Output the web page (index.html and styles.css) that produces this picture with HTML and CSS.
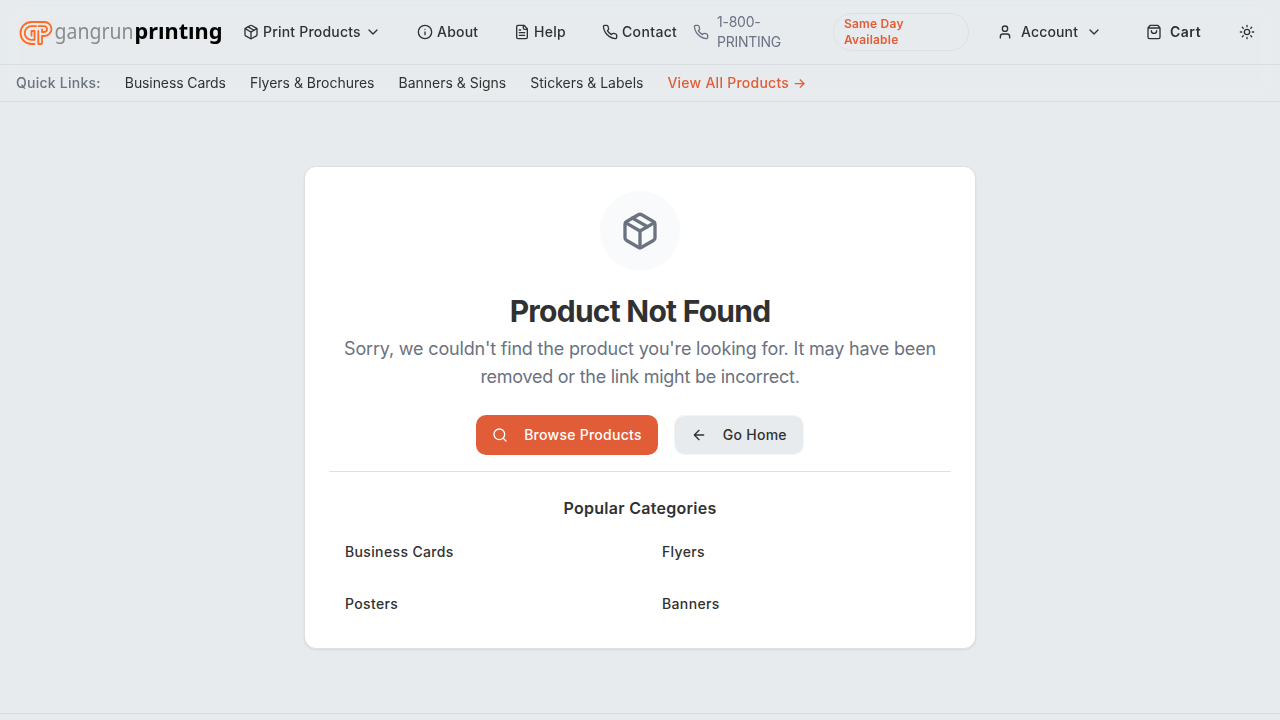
FILE: index.html
```html
<!DOCTYPE html>
<html lang="en">
<head>
<meta charset="utf-8">
<title>Product Not Found</title>
<link rel="stylesheet" href="styles.css">
</head>
<body>
<svg class="defs" width="0" height="0">
  <symbol id="package" viewBox="0 0 24 24"><path d="m7.5 4.27 9 5.15"/><path d="M21 8a2 2 0 0 0-1-1.73l-7-4a2 2 0 0 0-2 0l-7 4A2 2 0 0 0 3 8v8a2 2 0 0 0 1 1.73l7 4a2 2 0 0 0 2 0l7-4A2 2 0 0 0 21 16Z"/><path d="m3.3 7 8.7 5 8.7-5"/><path d="M12 22V12"/></symbol>
  <symbol id="chevron" viewBox="0 0 24 24"><path d="m6 9 6 6 6-6"/></symbol>
  <symbol id="phone" viewBox="0 0 24 24"><path d="M22 16.92v3a2 2 0 0 1-2.18 2 19.79 19.79 0 0 1-8.63-3.07 19.5 19.5 0 0 1-6-6 19.79 19.79 0 0 1-3.07-8.67A2 2 0 0 1 4.11 2h3a2 2 0 0 1 2 1.72 12.84 12.84 0 0 0 .7 2.81 2 2 0 0 1-.45 2.11L8.09 9.91a16 16 0 0 0 6 6l1.27-1.27a2 2 0 0 1 2.11-.45 12.84 12.84 0 0 0 2.81.7A2 2 0 0 1 22 16.92z"/></symbol>
</svg>
<header class="header">
  <div class="topbar">
    <a class="logo"><svg width="216" height="48" viewBox="0 -8 216 48" role="img" aria-label="gangrunprinting">
      <g class="logo-mark">
        <path d="M18.500 28H15.500A11 11 0 0 1 15.500 6H28.500A7 7 0 0 1 28.500 20H26V27.500Q26 28 24.500 28H22.300V15"/>
        <path d="M20 10.200H15.500A6.800 6.800 0 0 0 15.500 23.800H18.500V15H15.500V19.500"/>
        <path d="M22.500 10.200H28.200A2.900 2.900 0 0 1 28.200 16H26V13.500"/>
      </g>
      <text class="logo-thin" x="38.500" y="23.200" textLength="79" lengthAdjust="spacingAndGlyphs">gangrun</text>
      <text class="logo-bold" x="118.500" y="23.200" textLength="88" lengthAdjust="spacingAndGlyphs">prıntıng</text>
    </svg></a>
    <nav class="nav">
      <a class="nav-item products"><svg class="icon"><use href="#package"/></svg><span>Print Products</span><svg class="icon chev"><use href="#chevron"/></svg></a>
      <a class="nav-item about"><svg class="icon" viewBox="0 0 24 24"><circle cx="12" cy="12" r="10"/><path d="M12 16v-4M12 8h.01"/></svg><span>About</span></a>
      <a class="nav-item help"><svg class="icon" viewBox="0 0 24 24"><path d="M15 2H6a2 2 0 0 0-2 2v16a2 2 0 0 0 2 2h12a2 2 0 0 0 2-2V7Z"/><path d="M14 2v4a2 2 0 0 0 2 2h4M10 9H8M16 13H8M16 17H8"/></svg><span>Help</span></a>
      <a class="nav-item contact"><svg class="icon"><use href="#phone"/></svg><span>Contact</span></a>
    </nav>
    <a class="tel"><svg class="icon"><use href="#phone"/></svg><span>1-800-<br>PRINTING</span></a>
    <span class="badge">Same Day<br>Available</span>
    <a class="nav-item account"><svg class="icon" viewBox="0 0 24 24"><path d="M19 21v-2a4 4 0 0 0-4-4H9a4 4 0 0 0-4 4v2"/><circle cx="12" cy="7" r="4"/></svg><span>Account</span><svg class="icon"><use href="#chevron"/></svg></a>
    <a class="nav-item cart"><svg class="icon" viewBox="0 0 24 24"><path d="M6 2 3 6v14a2 2 0 0 0 2 2h14a2 2 0 0 0 2-2V6l-3-4ZM3 6h18M16 10a4 4 0 0 1-8 0"/></svg><span>Cart</span></a>
    <a class="theme"><svg class="icon" viewBox="0 0 24 24"><circle cx="12" cy="12" r="4"/><path d="M12 2v2M12 20v2m-7.070-17.070 1.410 1.410m11.320 11.320 1.410 1.410M2 12h2M20 12h2M6.340 17.660l-1.410 1.410M19.070 4.930l-1.410 1.410"/></svg></a>
  </div>
  <div class="quick">
    <span class="quick-label">Quick Links:</span>
    <a class="tight">Business Cards</a><a>Flyers &amp; Brochures</a><a>Banners &amp; Signs</a><a>Stickers &amp; Labels</a>
    <a class="view-all">View All Products →</a>
  </div>
</header>
<main class="main">
  <section class="card">
    <div class="circle"><svg class="icon-large"><use href="#package"/></svg></div>
    <h1 class="title">Product Not Found</h1>
    <p class="message">Sorry, we couldn't find the product you're looking for. It may have been <span class="message-end">removed or the link might be incorrect.</span></p>
    <div class="actions">
      <a class="btn primary"><svg class="icon" viewBox="0 0 24 24"><circle cx="11" cy="11" r="8"/><path d="m21 21-4.300-4.300"/></svg><span>Browse Products</span></a>
      <a class="btn secondary"><svg class="icon" viewBox="0 0 24 24"><path d="m12 19-7-7 7-7M19 12H5"/></svg><span>Go Home</span></a>
    </div>
    <div class="popular">
      <h2 class="subtitle">Popular Categories</h2>
      <div class="categories"><a>Business Cards</a><a>Flyers</a><a>Posters</a><a>Banners</a></div>
    </div>
  </section>
</main>
<footer class="footer"></footer>
</body>
</html>
```
FILE: styles.css
```css
* { box-sizing: border-box; margin: 0; }
body { background: #e7ebee; color: #313131; font: 400 14px/20px Inter, sans-serif; height: 720px; overflow: hidden; }
.defs { display: block; height: 0; }
.header { backdrop-filter: blur(8px); will-change: transform; height: 102px; border-bottom: 1px solid #d9dde1; }
.icon { width: 16px; height: 16px; flex: none; }
.icon, .icon-large { fill: none; stroke: currentColor; stroke-width: 2; stroke-linecap: round; stroke-linejoin: round; }
.topbar { display: flex; align-items: center; height: 64px; padding-left: 16px; }
.logo { display: flex; width: 227px; }
.logo-mark { fill: none; stroke: #ff6b22; stroke-width: 1.8; stroke-linecap: round; stroke-linejoin: round; }
.logo-thin { font: 400 21.5px "Noto Sans", sans-serif; fill: #8b8b8b; }
.logo-bold { font: 700 21.5px "Noto Sans", sans-serif; fill: #000; }
.nav { display: flex; width: 450px; }
.nav-item { display: flex; align-items: center; gap: 4px; font-weight: 500; letter-spacing: .28px; }
.products { width: 174px; letter-spacing: .2px; }
.about { width: 97px; letter-spacing: .2px; }
.help { width: 88px; }
.contact { letter-spacing: .35px; }
.tel { display: flex; align-items: center; gap: 8px; width: 140px; color: #6b7280; letter-spacing: -.25px; }
.badge { width: 136px; height: 38px; padding: 2px 10px; border: 1px solid #dcdfe3; border-radius: 19px; color: #e35c35; font-size: 12px; line-height: 16px; font-weight: 600; letter-spacing: .2px; }
.account { gap: 8px; margin-left: 28px; width: 149px; letter-spacing: .15px; }
.cart { gap: 8px; width: 93px; font-weight: 600; letter-spacing: .5px; }
.theme { display: flex; }
.quick { display: flex; align-items: center; gap: 24px; height: 37px; padding: 0 16px; border-top: 1px solid #d9dde1; letter-spacing: -.01px; }
.tight { letter-spacing: -.1px; }
.quick-label { color: #6b7280; font-weight: 500; letter-spacing: .25px; }
.view-all { color: #e35c35; font-weight: 500; letter-spacing: .25px; }
.main { height: 611px; padding-top: 64px; }
.card { width: 672px; height: 483px; margin: 0 auto; padding: 24px; background: #fff; border: 1px solid #dcdfe3; border-radius: 12px; box-shadow: 0 1px 2px rgba(0,0,0,.08); text-align: center; }
.circle { display: flex; align-items: center; justify-content: center; width: 80px; height: 80px; margin: 0 auto 22px; background: #f9fafb; border-radius: 50%; color: #6b7280; }
.icon-large { width: 40px; height: 40px; }
.title { font-size: 30px; line-height: 36px; font-weight: 700; letter-spacing: -.75px; }
.message { margin-top: 6px; padding: 0 12px; color: #6b7280; font-size: 18px; line-height: 28px; letter-spacing: -.18px; }
.message-end { letter-spacing: -.26px; }
.actions { display: flex; justify-content: center; align-items: center; gap: 16px; margin-top: 24px; }
.btn { display: flex; align-items: center; gap: 16px; height: 40px; padding: 0 16px; border-radius: 10px; font-weight: 500; letter-spacing: .27px; }
.primary { background: #e05d38; color: #fff; }
.secondary { background: #e7ebee; background-clip: padding-box; border: 1px solid #f3f4f6; }
.popular { margin-top: 16px; padding-top: 24px; border-top: 1px solid #dcdfe3; }
.subtitle { font-size: 16px; line-height: 24px; font-weight: 600; letter-spacing: .27px; }
.categories { display: grid; grid-template-columns: 1fr 1fr; gap: 12px; margin-top: 12px; text-align: left; font-weight: 500; letter-spacing: .36px; }
.categories a { padding: 10px 16px; }
.footer { border-top: 1px solid #d9dde1; }
```
